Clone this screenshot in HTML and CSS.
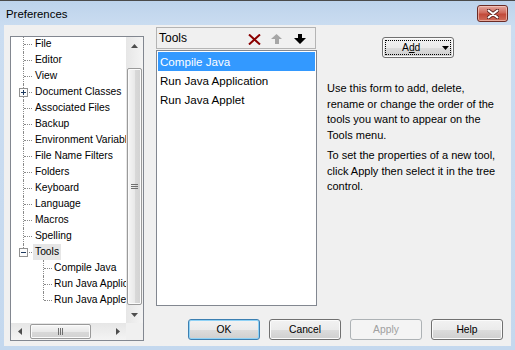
FILE: index.html
```html
<!DOCTYPE html>
<html>
<head>
<meta charset="utf-8">
<title>Preferences</title>
<link rel="stylesheet" href="styles.css">
</head>
<body>
<div class="window">
  <header class="titlebar">
    <span class="title">Preferences</span>
    <span class="close">
      <svg width="12" height="10" viewBox="0 0 12 10"><path d="M1.5 1.5 L10.5 8.5 M10.5 1.5 L1.5 8.5" stroke="#5a2320" stroke-width="3.6" stroke-linecap="round"/><path d="M1.5 1.5 L10.5 8.5 M10.5 1.5 L1.5 8.5" stroke="#ffffff" stroke-width="2" stroke-linecap="round"/></svg>
    </span>
  </header>
  <div class="client">
    <div class="tree">
      <div class="tree-view">
        <ul class="tree-list">
          <li class="node"><span class="label">File</span></li>
          <li class="node"><span class="label">Editor</span></li>
          <li class="node"><span class="label">View</span></li>
          <li class="node"><svg class="expander" width="9" height="9" viewBox="0 0 9 9"><rect x="0.5" y="0.5" width="8" height="8" fill="#fbfbfb" stroke="#919191"/><path d="M2 4.5h5M4.5 2v5" stroke="#1e3a5f"/></svg><span class="label">Document Classes</span></li>
          <li class="node"><span class="label">Associated Files</span></li>
          <li class="node"><span class="label">Backup</span></li>
          <li class="node"><span class="label">Environment Variables</span></li>
          <li class="node"><span class="label">File Name Filters</span></li>
          <li class="node"><span class="label">Folders</span></li>
          <li class="node"><span class="label">Keyboard</span></li>
          <li class="node"><span class="label">Language</span></li>
          <li class="node"><span class="label">Macros</span></li>
          <li class="node"><span class="label">Spelling</span></li>
          <li class="node last"><svg class="expander" width="9" height="9" viewBox="0 0 9 9"><rect x="0.5" y="0.5" width="8" height="8" fill="#fbfbfb" stroke="#919191"/><path d="M2 4.5h5" stroke="#1e3a5f"/></svg><span class="label current">Tools</span></li>
          <li class="node child"><span class="label">Compile Java</span></li>
          <li class="node child"><span class="label">Run Java Application</span></li>
          <li class="node child last"><span class="label">Run Java Applet</span></li>
        </ul>
      </div>
      <div class="vscroll">
        <div class="sb-btn"><svg width="7" height="4" viewBox="0 0 7 4"><polygon points="0,4 3.5,0 7,4" fill="#4d4d4d"/></svg></div>
        <div class="vtrack">
          <div class="vthumb"><svg width="7" height="5" viewBox="0 0 7 5"><path d="M0 0.5h7M0 2.5h7M0 4.5h7" stroke="#6f6f6f"/></svg></div>
        </div>
        <div class="sb-btn"><svg width="7" height="4" viewBox="0 0 7 4"><polygon points="0,0 7,0 3.5,4" fill="#4d4d4d"/></svg></div>
      </div>
      <div class="hscroll">
        <div class="sb-btn"><svg width="4" height="7" viewBox="0 0 4 7"><polygon points="4,0 4,7 0,3.5" fill="#4d4d4d"/></svg></div>
        <div class="htrack">
          <div class="hthumb"><svg width="5" height="7" viewBox="0 0 5 7"><path d="M0.5 0v7M2.5 0v7M4.5 0v7" stroke="#6f6f6f"/></svg></div>
        </div>
        <div class="sb-btn"><svg width="4" height="7" viewBox="0 0 4 7"><polygon points="0,0 4,3.5 0,7" fill="#4d4d4d"/></svg></div>
      </div>
      <div class="corner"></div>
    </div>

    <div class="main">
      <div class="top">
        <div class="tools">
          <div class="tools-header">
            <span class="tools-title">Tools</span>
            <span class="tool-icons">
              <svg class="ic-del" width="13" height="11" viewBox="0 0 13 11"><path d="M1 0.5 L12 10.5 M12 0.5 L1 10.5" stroke="#8b0000" stroke-width="2"/></svg>
              <svg class="ic-up" width="11" height="10" viewBox="0 0 11 10"><polygon points="5.5,0 11,5 8,5 8,10 4,10 4,5 0,5" fill="#a6a6a6"/></svg>
              <svg class="ic-down" width="12" height="10" viewBox="0 0 12 10"><polygon points="4,0 8,0 8,4 12,4 6,10 0,4 4,4" fill="#000"/></svg>
            </span>
          </div>
          <ul class="tools-list">
            <li class="item selected">Compile Java</li>
            <li class="item">Run Java Application</li>
            <li class="item">Run Java Applet</li>
          </ul>
        </div>
        <div class="info">
          <button class="btn add"><span>A<u>d</u>d</span><svg width="7" height="4" viewBox="0 0 7 4"><polygon points="0,0 7,0 3.5,4" fill="#000"/></svg></button>
          <p class="desc first">Use this form to add, delete, rename or change the order of the tools you want to appear on the Tools menu.</p>
          <p class="desc">To set the properties of a new tool, click Apply then select it in the tree control.</p>
        </div>
      </div>
      <div class="buttons">
        <button class="btn default">OK</button>
        <button class="btn">Cancel</button>
        <button class="btn disabled">Apply</button>
        <button class="btn">Help</button>
      </div>
    </div>
  </div>
</div>
</body>
</html>
```

FILE: styles.css
```css
* { box-sizing: border-box; }

html, body {
  margin: 0;
  padding: 0;
}

body {
  width: 515px;
  height: 350px;
  overflow: hidden;
  background: #ffffff;
  font-family: "Liberation Sans", Arial, sans-serif;
  color: #000;
}

.window {
  width: 515px;
  height: 350px;
  display: flex;
  flex-direction: column;
  background: linear-gradient(#bdd3eb, #cbddf1 26px, #c4d8ee);
  border-top: 1px solid #4a4a4a;
  padding: 0 4px 4px 4px;
}

/* Title bar */
.titlebar {
  height: 24px;
  display: flex;
  align-items: center;
  justify-content: space-between;
  padding: 0 3px 0 2px;
}

.title {
  font-size: 11.4px;
  padding-top: 2px;
  color: #000;
}

.close {
  width: 31px;
  height: 17px;
  margin-top: 1px;
  border: 1px solid #6b2b25;
  border-radius: 3px;
  background: linear-gradient(#e3a79e, #d06a5c 45%, #c24a3a 55%, #cf6d5b);
  box-shadow: inset 0 0 0 1px rgba(255, 220, 210, 0.55);
  display: flex;
  align-items: center;
  justify-content: center;
}

/* Client area */
.client {
  flex: 1;
  background: #f0f0f0;
  display: flex;
  align-items: flex-start;
  gap: 12px;
  padding: 2px 8px 0 6px;
}

/* Tree control */
.tree {
  width: 134px;
  height: 305px;
  margin-top: 9px;
  border: 1px solid #828790;
  background: #ffffff;
  display: grid;
  grid-template-columns: 115px 17px;
  grid-template-rows: 286px 17px;
}

.tree-view {
  overflow: hidden;
}

.tree-list {
  list-style: none;
  margin: -1px 0 0 0;
  padding: 0;
  font-size: 10.3px;
}

.node {
  position: relative;
  height: 16px;
  line-height: 16px;
  padding-left: 22px;
  white-space: nowrap;
}

.node::before {
  content: "";
  position: absolute;
  left: 12px;
  top: 0;
  bottom: 0;
  border-left: 1px dotted #8a8a8a;
}

.node::after {
  content: "";
  position: absolute;
  left: 13px;
  top: 8px;
  width: 8px;
  border-top: 1px dotted #8a8a8a;
}

.node.last::before {
  bottom: 8px;
}

.node.child {
  padding-left: 41px;
}

.node.child::before {
  left: 32px;
}

.node.child::after {
  left: 33px;
}

.expander {
  position: absolute;
  left: 8px;
  top: 4px;
  z-index: 1;
  display: block;
}

.label {
  display: inline-block;
  padding: 0 2px;
  height: 16px;
}

.label.current {
  background: #e6e6e6;
}

/* Scrollbars */
.vscroll {
  display: flex;
  flex-direction: column;
  background: linear-gradient(to right, #e6e6e6, #f4f4f4);
}

.sb-btn {
  width: 17px;
  height: 17px;
  flex: none;
  display: flex;
  align-items: center;
  justify-content: center;
}

.vtrack {
  flex: 1;
  padding: 14px 1px 1px 1px;
  display: flex;
}

.vthumb {
  flex: 1;
  border: 1px solid #9a9a9a;
  border-radius: 2px;
  background: linear-gradient(to right, #f6f6f6, #e9e9e9 50%, #d9d9d9 51%, #d2d2d2);
  box-shadow: inset 0 0 0 1px #fbfbfb;
  display: flex;
  align-items: center;
  justify-content: center;
}

.hscroll {
  display: flex;
  background: linear-gradient(#e6e6e6, #f4f4f4);
}

.htrack {
  flex: 1;
  padding: 1px 0 1px 2px;
  display: flex;
}

.hthumb {
  width: 61px;
  border: 1px solid #9a9a9a;
  border-radius: 2px;
  background: linear-gradient(#f6f6f6, #e9e9e9 50%, #d9d9d9 51%, #d2d2d2);
  box-shadow: inset 0 0 0 1px #fbfbfb;
  display: flex;
  align-items: center;
  justify-content: center;
}

.corner {
  background: #f0f0f0;
}

/* Main area */
.main {
  width: 347px;
  display: flex;
  flex-direction: column;
}

.top {
  display: flex;
  height: 279px;
}

.tools {
  width: 161px;
  flex: none;
  display: flex;
  flex-direction: column;
}

.tools-header {
  width: 160px;
  height: 22px;
  border: 1px solid #b4b4b4;
  display: flex;
  align-items: center;
  padding: 0 0 0 2px;
}

.tools-title {
  font-size: 12px;
  padding-bottom: 1px;
}

.tool-icons {
  display: flex;
  align-items: center;
  margin-left: 61px;
  padding-top: 2px;
}

.ic-up {
  margin-left: 10px;
}

.ic-down {
  margin-left: 12px;
}

.tools-list {
  list-style: none;
  margin: 1px 0 0 0;
  padding: 1px;
  height: 256px;
  border: 1px solid #828790;
  background: #ffffff;
  font-size: 11.6px;
}

.item {
  height: 19px;
  line-height: 19px;
  padding-left: 2px;
  white-space: nowrap;
}

.item.selected {
  background: #3399ff;
  color: #ffffff;
}

.info {
  flex: 1;
  padding-left: 10px;
}

.desc {
  width: 173px;
  margin: 5px 0 0 0;
  font-size: 11px;
  line-height: 15.5px;
}

.desc.first {
  margin-top: 23px;
}

/* Buttons */
.btn {
  width: 72px;
  height: 21px;
  padding: 0;
  border: 1px solid #707070;
  border-radius: 3px;
  background: linear-gradient(#f2f2f2, #ebebeb 50%, #dddddd 51%, #cfcfcf);
  box-shadow: inset 0 0 0 1px #fbfbfb;
  font-family: "Liberation Sans", Arial, sans-serif;
  font-size: 10.3px;
  color: #000;
}

.btn.add {
  display: flex;
  align-items: center;
  margin: 10px 0 0 55px;
  padding: 0 4px 0 19px;
  outline: 1px dotted #000;
  outline-offset: -4px;
}

.btn.add svg {
  margin-left: auto;
  margin-top: 1px;
}

.btn.default {
  border-color: #3c7fb1;
  box-shadow: inset 0 0 0 1px #8fd2f6;
}

.btn.disabled {
  border-color: #adb2b5;
  background: #f4f4f4;
  box-shadow: none;
  color: #a0a0a0;
}

.buttons {
  display: flex;
  justify-content: flex-end;
  gap: 9px;
  margin-top: 13px;
}
```
